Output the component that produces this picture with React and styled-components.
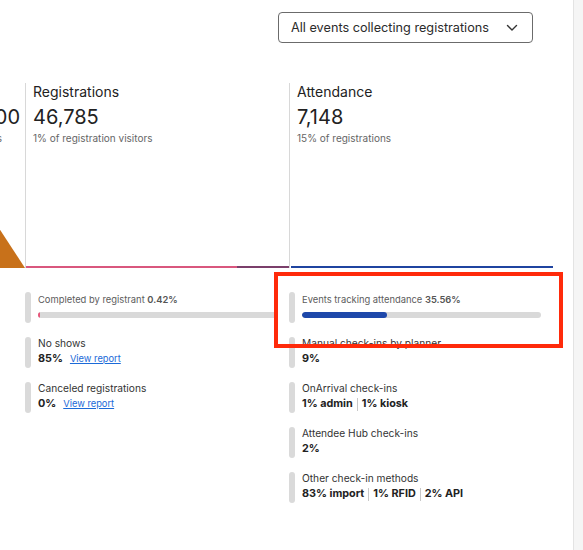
import React from 'react';
import styled, { createGlobalStyle } from 'styled-components';

const GlobalStyle = createGlobalStyle`
  html, body {
    margin: 0;
    padding: 0;
    background: #ffffff;
    font-family: 'Inter', 'Noto Sans', sans-serif;
    color: #2b2b2b;
  }
`;

const Page = styled.div`
  position: relative;
  display: flex;
  width: 583px;
  height: 550px;
  overflow: hidden;
`;

const Main = styled.main`
  flex: 1;
  overflow: hidden;
`;

const Scrollbar = styled.div`
  width: 9px;
  border-left: 1px solid #e3e3e3;
  background: #f5f5f5;
`;

const Toolbar = styled.div`
  display: flex;
  justify-content: flex-end;
  padding: 12px 40px 0 0;
`;

const Select = styled.button`
  display: flex;
  align-items: center;
  justify-content: space-between;
  width: 255px;
  height: 31px;
  padding: 0 14px 0 12px;
  box-sizing: border-box;
  border: 1px solid #6b6b6b;
  border-radius: 4px;
  background: #fff;
  font-family: inherit;
  font-size: 12.7px;
  color: #2b2b2b;
  cursor: pointer;
`;

const Columns = styled.div`
  display: flex;
  margin: 40px 0 0 -239px;
`;

const Column = styled.section`
  display: flex;
  flex-direction: column;
  width: 264px;
  flex-shrink: 0;
  box-sizing: border-box;
  padding-left: ${p => (p.$first ? 0 : 7)}px;
  border-left: ${p => (p.$first ? 'none' : '1px solid #d8d8d8')};
  align-items: ${p => (p.$first ? 'flex-end' : 'flex-start')};
`;

const Title = styled.h3`
  margin: 0;
  font-size: 14px;
  line-height: 18px;
  font-weight: 400;
  color: #222;
`;

const Figure = styled.div`
  margin-top: 4px;
  font-size: 20px;
  line-height: 24px;
  color: #222;
  padding-right: ${p => p.$pad || 0}px;
`;

const Sub = styled.div`
  margin-top: 2px;
  font-size: 10px;
  line-height: 14px;
  color: #666;
  padding-right: ${p => p.$pad || 0}px;
`;

const Chart = styled.svg`
  display: block;
  margin-top: 2px;
  margin-left: ${p => (p.$first ? 0 : -7)}px;
  width: ${p => (p.$first ? 264 : 263)}px;
  height: 121px;
`;

const Details = styled.div`
  display: grid;
  grid-template-columns: 264px 264px;
  padding: 24px 0 0 25px;
`;

const List = styled.div`
  display: flex;
  flex-direction: column;
  gap: 14px;
`;

const Item = styled.div`
  display: flex;
  gap: 7px;
  min-height: 31px;
`;

const Stripe = styled.span`
  width: 6px;
  flex-shrink: 0;
  border-radius: 3px;
  background: #dadada;
`;

const Body = styled.div`
  flex: 1;
  padding-right: 12px;
`;

const Label = styled.div`
  font-size: ${p => (p.$muted ? 9.4 : 10.2)}px;
  line-height: 13px;
  color: ${p => (p.$muted ? '#5c5c5c' : '#333')};
  padding-top: ${p => (p.$muted ? 1 : 0)}px;

  b {
    font-weight: 600;
    color: #555;
  }
`;

const Value = styled.div`
  display: flex;
  align-items: center;
  font-size: 10.8px;
  line-height: 18px;
  font-weight: 700;
  color: #222;
`;

const Sep = styled.span`
  width: 1px;
  height: 13px;
  margin: 0 4px;
  background: #c8c8c8;
`;

const Link = styled.a`
  margin-left: 7px;
  font-size: 9.3px;
  font-weight: 400;
  color: #1b6ad8;
  text-decoration: underline;
`;

const Track = styled.div`
  height: 6px;
  margin-top: 6px;
  border-radius: 3px;
  background: #d9d9d9;
  overflow: hidden;
`;

const Fill = styled.div`
  height: 100%;
  border-radius: 3px;
  background: ${p => p.$color};
`;

const Highlight = styled.div`
  position: absolute;
  left: 274px;
  top: 272px;
  width: 289px;
  height: 76px;
  box-sizing: border-box;
  border: 4.5px solid #ff2a0a;
  pointer-events: none;
`;

const Chevron = () => (
  <svg width="12" height="8" viewBox="0 0 12 8" fill="none">
    <path d="M1.5 1.5L6 6L10.5 1.5" stroke="#333" strokeWidth="1.4" strokeLinecap="round" strokeLinejoin="round" />
  </svg>
);

const Bar = ({ pct, color }) => (
  <Track>
    <Fill $color={color} style={{ width: `${pct}%` }} />
  </Track>
);

const Values = ({ parts }) => (
  <Value>
    {parts.map((p, i) => (
      <React.Fragment key={p}>
        {i > 0 && <Sep />}
        {p}
      </React.Fragment>
    ))}
  </Value>
);

export default function App() {
  return (
    <>
      <GlobalStyle />
      <Page>
        <Main>
          <Toolbar>
            <Select>
              All events collecting registrations
              <Chevron />
            </Select>
          </Toolbar>

          <Columns>
            <Column $first>
              <Title>&nbsp;</Title>
              <Figure $pad={5}>3,487,900</Figure>
              <Sub $pad={23}>Registration page views</Sub>
              <Chart $first viewBox="0 0 264 121">
                <polygon points="0,0 185,0 264,121 0,121" fill="#c8711a" />
              </Chart>
            </Column>
            <Column>
              <Title>Registrations</Title>
              <Figure>46,785</Figure>
              <Sub>1% of registration visitors</Sub>
              <Chart viewBox="0 0 263 121">
                <line x1="0" y1="120" x2="211" y2="120" stroke="#d9577e" strokeWidth="2" />
                <line x1="211" y1="120" x2="263" y2="120" stroke="#7b3f6b" strokeWidth="2" />
              </Chart>
            </Column>
            <Column>
              <Title>Attendance</Title>
              <Figure>7,148</Figure>
              <Sub>15% of registrations</Sub>
              <Chart viewBox="0 0 263 121">
                <line x1="1" y1="120" x2="263" y2="120" stroke="#1f44a0" strokeWidth="2" />
              </Chart>
            </Column>
          </Columns>

          <Details>
            <List>
              <Item>
                <Stripe />
                <Body>
                  <Label $muted>Completed by registrant <b>0.42%</b></Label>
                  <Bar pct={0.9} color="#e8577b" />
                </Body>
              </Item>
              <Item>
                <Stripe />
                <Body>
                  <Label>No shows</Label>
                  <Value>85%<Link href="#">View report</Link></Value>
                </Body>
              </Item>
              <Item>
                <Stripe />
                <Body>
                  <Label>Canceled registrations</Label>
                  <Value>0%<Link href="#">View report</Link></Value>
                </Body>
              </Item>
            </List>

            <List>
              <Item>
                <Stripe />
                <Body>
                  <Label $muted>Events tracking attendance <b>35.56%</b></Label>
                  <Bar pct={35.56} color="#1e48aa" />
                </Body>
              </Item>
              <Item>
                <Stripe />
                <Body>
                  <Label>Manual check-ins by planner</Label>
                  <Values parts={['9%']} />
                </Body>
              </Item>
              <Item>
                <Stripe />
                <Body>
                  <Label>OnArrival check-ins</Label>
                  <Values parts={['1% admin', '1% kiosk']} />
                </Body>
              </Item>
              <Item>
                <Stripe />
                <Body>
                  <Label>Attendee Hub check-ins</Label>
                  <Values parts={['2%']} />
                </Body>
              </Item>
              <Item>
                <Stripe />
                <Body>
                  <Label>Other check-in methods</Label>
                  <Values parts={['83% import', '1% RFID', '2% API']} />
                </Body>
              </Item>
            </List>
          </Details>
        </Main>
        <Scrollbar />
        <Highlight />
      </Page>
    </>
  );
}
